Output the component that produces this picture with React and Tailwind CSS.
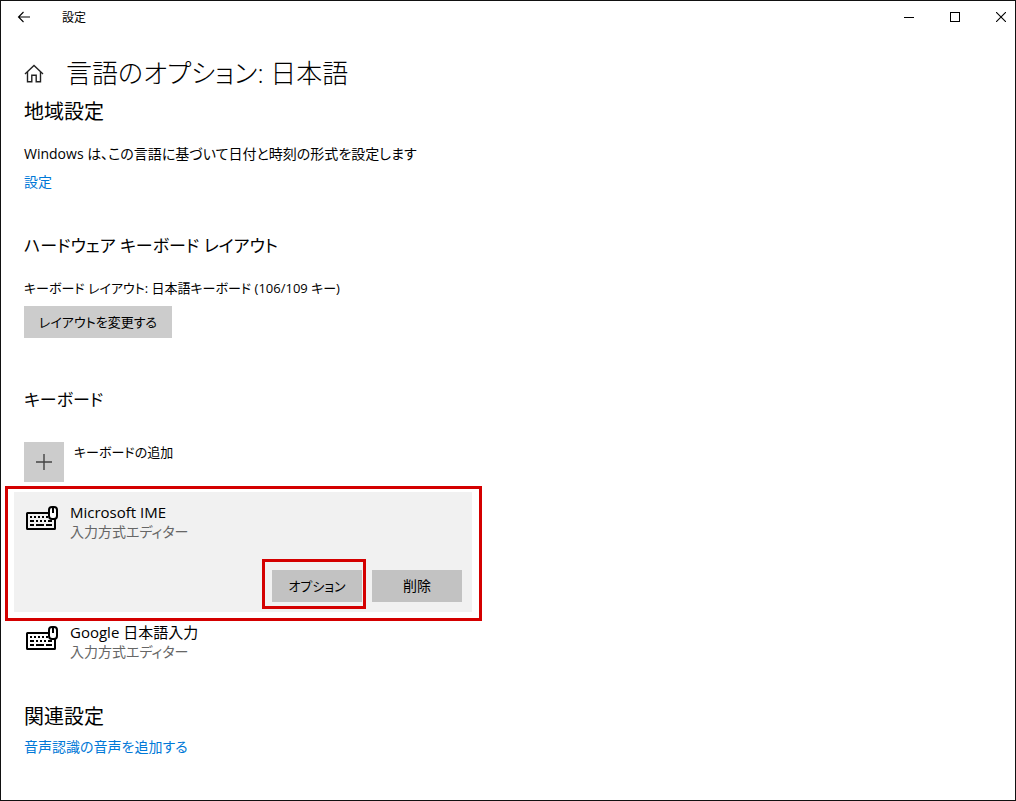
import React from "react";

const inputMethods = [
  { id: "ms-ime", name: "Microsoft IME", kind: "入力方式エディター" },
  { id: "google", name: "Google 日本語入力", kind: "入力方式エディター" },
];

function BackIcon() {
  return (
    <svg width="14" height="12" viewBox="0 0 14 12" fill="none" stroke="#000" strokeWidth="1.1" aria-hidden="true">
      <path d="M13 6H1.5M6.5 1l-5 5 5 5" />
    </svg>
  );
}

function HomeIcon() {
  return (
    <svg width="20" height="20" viewBox="0 0 20 20" fill="none" stroke="#222" strokeWidth="1.4" aria-hidden="true">
      <path d="M1 11L10 2.4l9 8.6" />
      <path d="M3.5 9v9.8h4.3v-6.5h4.4v6.5h4.3V9" />
    </svg>
  );
}

function KeyboardIcon() {
  return (
    <svg width="32" height="24" viewBox="0 0 32 24" fill="none" className="shrink-0" aria-hidden="true">
      <rect x="1" y="7" width="28" height="16" rx="0.5" stroke="#000" strokeWidth="2" />
      <path
        d="M4 11h2M8 11h2M12 11h2M16 11h2M20 11h2M4 15h4M10 15h2M14 15h2M18 15h2M22 15h4M4 19h4M10 19h8M20 19h6"
        stroke="#000"
        strokeWidth="2"
      />
      <rect x="23" y="1" width="8" height="12" rx="3" fill="#fff" stroke="#000" strokeWidth="2" />
      <path d="M27 2v5" stroke="#000" strokeWidth="2" />
    </svg>
  );
}

function TitleBar() {
  return (
    <header className="flex h-8 items-center justify-between">
      <div className="flex items-center">
        <button type="button" aria-label="戻る" className="flex h-8 w-[46px] items-center justify-center">
          <BackIcon />
        </button>
        <span className="ml-[15px] pt-[2px] text-[12px] leading-4">設定</span>
      </div>
      <div className="flex gap-[18px]">
        <button type="button" aria-label="最小化" className="flex h-8 w-7 items-center justify-center">
          <svg width="10" height="10" viewBox="0 0 10 10" stroke="#000" aria-hidden="true">
            <path d="M0 5.5h10" />
          </svg>
        </button>
        <button type="button" aria-label="最大化" className="flex h-8 w-7 items-center justify-center">
          <svg width="10" height="10" viewBox="0 0 10 10" fill="none" stroke="#000" aria-hidden="true">
            <rect x="0.5" y="0.5" width="9" height="9" />
          </svg>
        </button>
        <button type="button" aria-label="閉じる" className="flex h-8 w-7 items-center justify-center">
          <svg width="10" height="10" viewBox="0 0 10 10" stroke="#000" strokeWidth="1.1" aria-hidden="true">
            <path d="M0 0l10 10M10 0L0 10" />
          </svg>
        </button>
      </div>
    </header>
  );
}

function InputMethod({ method }) {
  return (
    <div className="flex items-start gap-3">
      <div className="pt-1">
        <KeyboardIcon />
      </div>
      <div>
        <p className="text-[15px] leading-5">{method.name}</p>
        <p className="text-[#666]">{method.kind}</p>
      </div>
    </div>
  );
}

export default function App() {
  const [selected, other] = inputMethods;

  return (
    <div
      lang="ja"
      className="min-h-screen border border-[#111] bg-white font-['Open_Sans','Noto_Sans_CJK_JP',sans-serif] text-[14px] leading-5 font-normal text-black [font-feature-settings:'palt']"
    >
      <TitleBar />

      <main className="px-[23px] pb-10">
        <div className="mt-5 flex items-center">
          <a href="#home" aria-label="ホーム">
            <HomeIcon />
          </a>
          <h1 className="ml-[22px] text-[26px] leading-10 font-light">言語のオプション: 日本語</h1>
        </div>

        <section className="mt-[5px]">
          <h2 className="text-[20px] leading-7">地域設定</h2>
          <p className="mt-[18px]">Windows は、この言語に基づいて日付と時刻の形式を設定します</p>
          <a href="#region" className="mt-2 block w-fit text-[#0078d7]">
            設定
          </a>
        </section>

        <section className="mt-10">
          <h2 className="text-[17px] leading-7">ハードウェア キーボード レイアウト</h2>
          <p className="mt-[18px] text-[13px] leading-5">キーボード レイアウト: 日本語キーボード (106/109 キー)</p>
          <button type="button" className="mt-2 block h-8 w-[148px] bg-[#ccc] text-[13px] whitespace-nowrap">
            レイアウトを変更する
          </button>
        </section>

        <section className="mt-12">
          <h2 className="text-[17px] leading-7">キーボード</h2>
          <button type="button" className="mt-7 flex items-start gap-[10px] text-left text-[13px] leading-5">
            <span className="flex size-10 items-center justify-center bg-[#ccc]">
              <svg width="16" height="16" viewBox="0 0 16 16" stroke="#444" strokeWidth="1.4" aria-hidden="true">
                <path d="M0 8h16M8 0v16" />
              </svg>
            </span>
            <span>キーボードの追加</span>
          </button>

          {/* Selected input method */}
          <div className="mt-1 -ml-[19px] max-w-[477px] border-3 border-[#d40000] pt-[3px] pr-[7px] pb-[6px] pl-[6px]">
            <div className="bg-[#f1f1f1] pt-[10px] pr-[10px] pb-[10px] pl-3">
              <InputMethod method={selected} />
              <div className="mt-7 flex justify-end gap-[10px]">
                <div className="relative">
                  <button type="button" className="block h-8 w-[90px] bg-[#c2c2c2] text-[13px]">
                    オプション
                  </button>
                  <span className="pointer-events-none absolute -top-[11px] -right-1 -bottom-[7px] -left-[10px] border-3 border-[#d40000]" />
                </div>
                <button type="button" className="block h-8 w-[90px] bg-[#c2c2c2]">
                  削除
                </button>
              </div>
            </div>
          </div>

          <div className="mt-px ml-[2px]">
            <InputMethod method={other} />
          </div>
        </section>

        <section className="mt-[41px]">
          <h2 className="text-[20px] leading-7">関連設定</h2>
          <a href="#speech" className="mt-[6px] block w-fit text-[#0078d7]">
            音声認識の音声を追加する
          </a>
        </section>
      </main>
    </div>
  );
}
